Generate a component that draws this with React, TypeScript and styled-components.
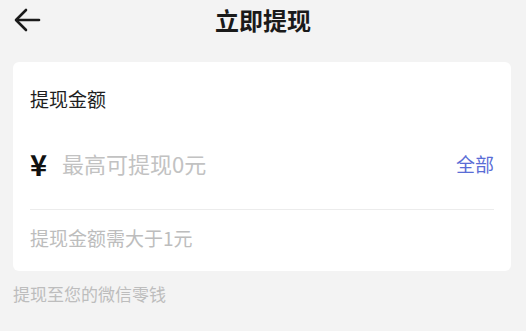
import React, { useState } from 'react';
import styled, { createGlobalStyle } from 'styled-components';

const GlobalStyle = createGlobalStyle`
  html, body {
    margin: 0;
    padding: 0;
    background: #f3f3f3;
    font-family: "Noto Sans CJK SC", "Noto Sans", sans-serif;
  }
`

const Page = styled.div`
  width: 526px;
  height: 331px;
  background: #f3f3f3;
  overflow: hidden;
`

const Header = styled.div`
  height: 40px;
  display: grid;
  grid-template-columns: 60px 1fr 60px;
  align-items: center;
`

const BackButton = styled.button`
  border: none;
  background: none;
  padding: 0 0 0 14px;
  display: flex;
  align-items: center;
  cursor: pointer;
`

const Title = styled.h1`
  margin: 0;
  text-align: center;
  font-size: 24px;
  font-weight: 700;
  color: #1a1a1a;
  line-height: 40px;
`

const Card = styled.div`
  margin: 22px 15px 0 13px;
  background: #fff;
  border-radius: 6px;
  padding: 24px 17px 20px 17px;
`

const Label = styled.div`
  font-size: 19px;
  line-height: 26px;
  color: #1e1e1e;
`

const AmountRow = styled.div`
  margin-top: 31px;
  height: 40px;
  display: flex;
  align-items: center;
`

const Yen = styled.span`
  font-size: 29px;
  font-weight: 700;
  color: #111;
  width: 32px;
  padding-left: 0;
`

const AmountInput = styled.input`
  flex: 1;
  border: none;
  outline: none;
  font-family: inherit;
  font-size: 22px;
  color: #222;
  padding: 0;
  background: transparent;

  &::placeholder {
    color: #c2c2c2;
  }
`

const AllLink = styled.span`
  font-size: 19px;
  color: #5a6dd6;
  cursor: pointer;
`

const Divider = styled.div`
  height: 1px;
  background: #ececec;
  margin-top: 26px;
`

const Hint = styled.div`
  margin-top: 15px;
  font-size: 19px;
  line-height: 26px;
  color: #bdbdbd;
`

const Footer = styled.div`
  margin: 12px 0 0 13px;
  font-size: 17px;
  line-height: 22px;
  color: #bdbdbd;
`

const App = () => {
    const [amount, setAmount] = useState('');
    return (
        <Page>
            <GlobalStyle />
            <Header>
                <BackButton>
                    <svg width="27" height="24" viewBox="0 0 27 24" fill="none" stroke="#1a1a1a" strokeWidth="2.6" strokeLinecap="round" strokeLinejoin="round">
                        <path d="M25 12H3" />
                        <path d="M12 2L2 12l10 10" />
                    </svg>
                </BackButton>
                <Title>立即提现</Title>
                <div />
            </Header>
            <Card>
                <Label>提现金额</Label>
                <AmountRow>
                    <Yen>¥</Yen>
                    <AmountInput
                        value={amount}
                        onChange={(e) => setAmount(e.target.value)}
                        placeholder="最高可提现0元"
                    />
                    <AllLink onClick={() => setAmount('0')}>全部</AllLink>
                </AmountRow>
                <Divider />
                <Hint>提现金额需大于1元</Hint>
            </Card>
            <Footer>提现至您的微信零钱</Footer>
        </Page>
    )
}

export default App;
